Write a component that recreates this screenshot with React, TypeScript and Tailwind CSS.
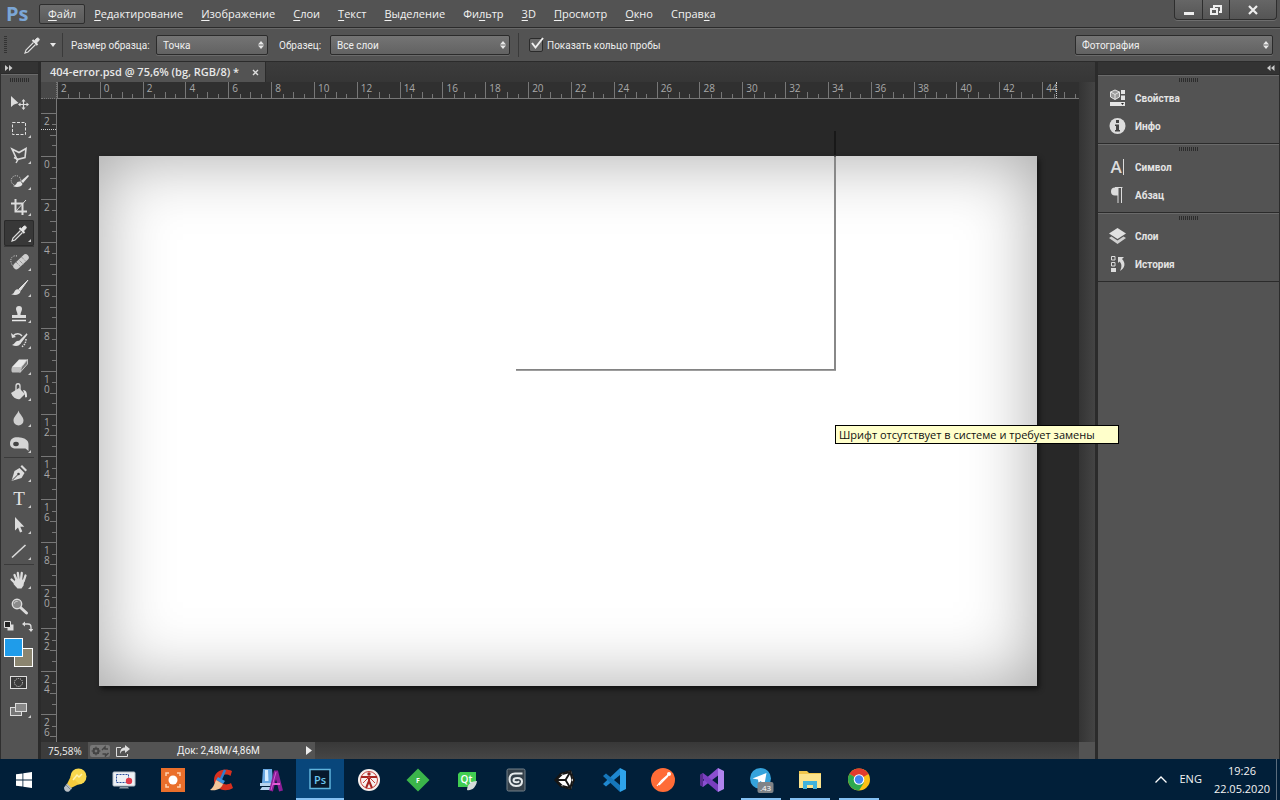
import { useState, type ReactNode } from 'react';
import { FaUnity } from 'react-icons/fa';

type Tool = { name: string; icon: ReactNode; corner?: boolean };

const menuItems = [
  { pre: '', key: 'Ф', post: 'айл' },
  { pre: '', key: 'Р', post: 'едактирование' },
  { pre: '', key: 'И', post: 'зображение' },
  { pre: '', key: 'С', post: 'лои' },
  { pre: '', key: 'Т', post: 'екст' },
  { pre: '', key: 'В', post: 'ыделение' },
  { pre: 'Фи', key: 'л', post: 'ьтр' },
  { pre: '', key: '3', post: 'D' },
  { pre: '', key: 'П', post: 'росмотр' },
  { pre: '', key: 'О', post: 'кно' },
  { pre: 'Справ', key: 'к', post: 'а' },
];

const eyedropper = (
  <>
    <path d="M17 9.5l2.500-3c1.500-1.500 3.800.6 2.300 2.200l-2.700 2.600z" fill="#e4e4e4" stroke="#e4e4e4" />
    <path d="M15.500 8l5 5" stroke="#e4e4e4" strokeWidth="2" />
    <path d="M16.500 10.500L9 18l-1 3 3-1 7.500-7.500" fill="#444" stroke="#dcdcdc" strokeWidth="1.200" />
  </>
);

const toolGroups: Tool[][] = [
  [
    {
      name: 'Перемещение',
      icon: (
        <>
          <path d="M7 6v11l3-2.500 4.500-1.500z" fill="#dcdcdc" />
          <path d="M19.500 10v9M15 14.500h9" stroke="#dcdcdc" strokeWidth="1.200" />
          <path d="M19.500 9l2 2.500h-4zM19.500 20l2-2.500h-4zM14 14.500l2.500-2v4zM25 14.500l-2.500-2v4z" fill="#dcdcdc" />
        </>
      ),
    },
    {
      name: 'Прямоугольная область',
      corner: true,
      icon: <rect x="8.500" y="6.500" width="13" height="12" fill="none" stroke="#e0e0e0" strokeDasharray="3 1.500" />,
    },
    {
      name: 'Лассо',
      corner: true,
      icon: (
        <>
          <path d="M8 7l7 3.500 7-4-1 9-8 2z" fill="none" stroke="#dcdcdc" strokeWidth="1.600" />
          <path d="M10 15.500l4 2-2 3.500" fill="none" stroke="#dcdcdc" strokeWidth="1.400" />
        </>
      ),
    },
    {
      name: 'Быстрое выделение',
      corner: true,
      icon: (
        <>
          <circle cx="12" cy="12.500" r="4.800" fill="none" stroke="#dcdcdc" strokeDasharray="1 1.300" />
          <path d="M24 7l-7 6 2 2 6-7z" fill="#e4e4e4" />
          <path d="M17 14c-2-1-4 0-4.500 1.500S10 18 9 18c3 2 9 1 9.500-2z" fill="#e4e4e4" />
        </>
      ),
    },
    {
      name: 'Рамка',
      corner: true,
      icon: (
        <>
          <path d="M11.500 5v12.500H23M7 9.500h11.500V21" fill="none" stroke="#dcdcdc" strokeWidth="2" />
          <path d="M12 17L22 6" stroke="#dcdcdc" />
        </>
      ),
    },
    { name: 'Пипетка', corner: true, icon: eyedropper },
  ],
  [
    {
      name: 'Восстанавливающая кисть',
      corner: true,
      icon: (
        <>
          <path d="M13 7c-4-1-7 2-6 6 .5 2 1 3 2 4" fill="none" stroke="#dcdcdc" strokeDasharray="1 1.400" />
          <path d="M21.500 8.500L12.500 17" stroke="#cfcfcf" strokeWidth="6.500" strokeLinecap="round" />
          <path d="M14.500 10.500l5 5M17.500 8l4.500 4.500M12 13l4.500 4.500" stroke="#777" strokeDasharray="1 1" />
        </>
      ),
    },
    {
      name: 'Кисть',
      corner: true,
      icon: (
        <>
          <path d="M24 5l-9 9 1.500 1.500z" fill="#e0e0e0" stroke="#e0e0e0" />
          <path d="M15 14.500c-3-1-4 1-5 3-.6 1-1.500 1.500-3 1.500 4 2 9 .5 9.500-2.500z" fill="#e0e0e0" />
        </>
      ),
    },
    {
      name: 'Штамп',
      corner: true,
      icon: (
        <>
          <path d="M15 5a3 3 0 013 3c0 2-1.500 3-1.500 6H22v3H8v-3h5.500c0-3-1.500-4-1.500-6a3 3 0 013-3z" fill="#dcdcdc" />
          <path d="M8 19.500h14" stroke="#e8e8e8" strokeWidth="1.500" />
        </>
      ),
    },
    {
      name: 'Архивная кисть',
      corner: true,
      icon: (
        <>
          <path d="M9 9c3-3 7-3 9 0" fill="none" stroke="#dcdcdc" strokeWidth="1.500" />
          <path d="M7 6l1 5 4-1z" fill="#dcdcdc" />
          <path d="M23 7l-8 8 1 1z" fill="#e0e0e0" stroke="#e0e0e0" strokeWidth="1.500" />
          <path d="M15 14c-3-1-4 3-7 4 4 2 8 1 8.500-2z" fill="#e0e0e0" />
          <path d="M22 12c0 4-2 7-5 8" fill="none" stroke="#dcdcdc" strokeWidth="1.500" strokeDasharray="1.500 1" />
        </>
      ),
    },
    {
      name: 'Ластик',
      corner: true,
      icon: (
        <>
          <path d="M8 14l7-7.500h8.500l-6 7.500z" fill="#e8e8e8" />
          <path d="M8 14h9.500l-2 5.500H8.500c-1 0-1.500-3-.5-5.500z" fill="#c0c0c0" />
          <path d="M17.500 14l6-7.500v4.500l-7.500 8.500z" fill="#777" stroke="#dcdcdc" strokeWidth=".800" />
        </>
      ),
    },
    {
      name: 'Заливка',
      corner: true,
      icon: (
        <>
          <path d="M7 14l8-5 6 6-5 5c-3 1-7-1-9-6z" fill="#d8d8d8" />
          <path d="M12 13V7c0-3 4-3 4 0v5" fill="none" stroke="#dcdcdc" strokeWidth="1.300" />
          <path d="M19 11c4 0 4 4 4 7-2 1-2 0-2-2" fill="#e4e4e4" />
        </>
      ),
    },
    {
      name: 'Размытие',
      corner: true,
      icon: <path d="M14.500 5.500c1 4 5 6 5 10a5 5 0 01-10 0c0-4 4-6 5-10z" fill="#cfcfcf" />,
    },
    {
      name: 'Губка',
      corner: true,
      icon: (
        <>
          <path d="M6 12.500C6 7 11 5.500 16 6.500c5 .5 8.500 3 8.500 6.500v7l-3-2.500H12c-4 0-6-1.500-6-5z" fill="#d4d4d4" />
          <ellipse cx="12" cy="13" rx="2.800" ry="2.200" fill="#444" />
        </>
      ),
    },
  ],
  [
    {
      name: 'Перо',
      corner: true,
      icon: (
        <>
          <path d="M18 5l5 5-1.500 1.500-5-5z" fill="#dcdcdc" />
          <path d="M15.500 8l5 5-3 5-10 3 3-10z" fill="#dcdcdc" />
          <path d="M8 20.500l6-6" stroke="#444" />
          <circle cx="14.500" cy="14" r="1.300" fill="#444" />
        </>
      ),
    },
    {
      name: 'Текст',
      corner: true,
      icon: (
        <text x="15" y="19" textAnchor="middle" fontSize="19" fontFamily="Liberation Serif, serif" fill="#e4e4e4">T</text>
      ),
    },
    {
      name: 'Выделение контура',
      corner: true,
      icon: <path d="M11 5v13.500l3-3 2 5 2.300-1-2-4.700h4z" fill="#dcdcdc" />,
    },
    { name: 'Линия', corner: true, icon: <path d="M8 19.500L21.500 7" stroke="#dcdcdc" strokeWidth="1.600" /> },
  ],
  [
    {
      name: 'Рука',
      corner: true,
      icon: (
        <>
          <path d="M10.500 8l2.500 6M13.800 6l1 7M17.800 6l-.8 7M21.500 8.500l-2 6M7.500 12.500l4 4" stroke="#dcdcdc" strokeWidth="2.300" strokeLinecap="round" />
          <path d="M11 13l9.500-.5-1 6-2 3h-4L9.500 17z" fill="#dcdcdc" />
        </>
      ),
    },
    {
      name: 'Масштаб',
      icon: (
        <>
          <path d="M16.500 14.500l6 5.500" stroke="#dcdcdc" strokeWidth="3" strokeLinecap="round" />
          <circle cx="13" cy="11" r="4.700" fill="#8a8a8a" stroke="#dcdcdc" strokeWidth="1.400" />
          <path d="M10.500 10.500c0-1.500 1.500-2.500 3-2" stroke="#ddd" fill="none" />
        </>
      ),
    },
  ],
];

const panelGroups = [
  [
    {
      title: 'Свойства',
      icon: (
        <>
          <path d="M6 1l4.500 2v5L6 10.500 1.500 8V3z" fill="#9a9a9a" stroke="#e4e4e4" />
          <path d="M1.500 3L6 5.500 10.500 3M6 5.500v5" stroke="#e4e4e4" fill="none" />
          <path d="M12 1h4v4h-4zM12 6.500h4V11h-4zM1 13h15v4H1z" fill="#e4e4e4" />
          <path d="M12 14h3l-1.500 2z" fill="#222" />
        </>
      ),
    },
    {
      title: 'Инфо',
      icon: (
        <>
          <circle cx="8.500" cy="9" r="8" fill="#dcdcdc" />
          <path d="M7 3h3v3H7zM6 7.500h4V13h1v1.500H6V13h1V9H6z" fill="#444" />
        </>
      ),
    },
  ],
  [
    {
      title: 'Символ',
      icon: (
        <>
          <text x="7" y="15" textAnchor="middle" fontSize="17" fontWeight="600" fontFamily="Open Sans, sans-serif" fill="#dcdcdc">A</text>
          <path d="M14.500 1v16" stroke="#dcdcdc" />
        </>
      ),
    },
    {
      title: 'Абзац',
      icon: (
        <>
          <path d="M9 1.500v8H6a4 4 0 010-8z" fill="#dcdcdc" />
          <path d="M6 1.500h7.500M9 2v15M12.500 2v15" stroke="#dcdcdc" />
        </>
      ),
    },
  ],
  [
    {
      title: 'Слои',
      icon: (
        <>
          <path d="M8.500 1L17 6.500 8.500 12 0 6.500z" fill="#e0e0e0" />
          <path d="M0 11l2.500-1.500 6 4 6-4L17 11l-8.500 6z" fill="#cfcfcf" />
        </>
      ),
    },
    {
      title: 'История',
      icon: (
        <>
          <path d="M2.500 1.500h3.500v3.500H2.500zM2.500 7.500h3.500V11H2.500z" fill="none" stroke="#dcdcdc" />
          <path d="M2 13h5v4H2z" fill="#dcdcdc" />
          <path d="M9 2h6l-2 2c4 4 3 9-2 12 2-4 2-7-.5-9.500L9 8z" fill="#dcdcdc" />
        </>
      ),
    },
  ],
];

const taskbarApps: { name: string; icon: ReactNode; state?: 'active' | 'running' }[] = [
  {
    name: 'Лампа',
    icon: (
      <>
        <circle cx="15.500" cy="8.500" r="8" fill="#f9d84e" />
        <path d="M8 8l8 8-8 4-4-4z" fill="#f6cb3c" />
        <path d="M10 12l4-5 2 2 3-3" stroke="#fff3b0" strokeWidth="1.500" fill="none" />
        <path d="M4 15.500l5 5-3 3c-3 1-5-1-5-4z" fill="#b9c0c6" />
        <path d="M3 17l5 5" stroke="#7f8a93" />
      </>
    ),
  },
  {
    name: 'Запись экрана',
    icon: (
      <>
        <rect x="1" y="4" width="22" height="14" rx="1" fill="#eef1f5" stroke="#b8c0c8" />
        <rect x="4.500" y="6.500" width="12" height="8" fill="none" stroke="#2b4f9c" strokeDasharray="2 1" />
        <circle cx="17" cy="13" r="3.200" fill="#e03a4a" />
        <path d="M8 19h8l1 1.500H7z" fill="#8d99a5" />
      </>
    ),
  },
  {
    name: 'Скриншот',
    icon: (
      <>
        <rect width="24" height="24" fill="#ea6f2b" />
        <circle cx="12" cy="12" r="4.500" fill="#fff" />
        <path d="M8 5H5v3M16 5h3v3M8 19H5v-3M16 19h3v-3" fill="none" stroke="#ffd2b0" strokeWidth="1.500" />
      </>
    ),
  },
  {
    name: 'CCleaner',
    icon: (
      <>
        <path d="M22 3C14-1 4 3 4 12c0 9 11 13 19 8l-2-5c-5 3-10 1-10-3.500C11 7 16 5 20.500 8z" fill="#d8301f" />
        <path d="M15 2l-4 9" stroke="#2f7fd0" strokeWidth="2.500" />
        <path d="M8 9l7 4-2 3-7-4z" fill="#3b93e0" />
        <path d="M6 12l7 4c-2 5-6 7-13 6 3-2 4-5 6-10z" fill="#f2c79a" />
      </>
    ),
  },
  {
    name: 'Редактор',
    icon: (
      <>
        <path d="M4 1h9l1 14H3z" fill="#6aa9e4" />
        <path d="M6 2h3l.5 11H6z" fill="#d8edff" />
        <path d="M1 15h13v3H1zM3 19h10v3H1z" fill="#b8d4ee" />
        <path d="M12 23l5-20 5 20" fill="none" stroke="#8d1f98" strokeWidth="4" />
        <path d="M14 16h7" stroke="#e35bd5" strokeWidth="2" />
        <path d="M12 22l5-18" stroke="#d45ad8" />
      </>
    ),
  },
  {
    name: 'Photoshop',
    state: 'active',
    icon: (
      <>
        <rect x="2" y="2.500" width="20" height="19" fill="#07182c" stroke="#5fb4dd" strokeWidth="1.500" />
        <text x="12" y="16.500" textAnchor="middle" fontSize="11" fontWeight="600" fontFamily="Open Sans, sans-serif" fill="#6cc4ee">Ps</text>
      </>
    ),
  },
  {
    name: 'Анатомия',
    icon: (
      <>
        <circle cx="12" cy="12" r="11" fill="#f7f0ee" />
        <circle cx="12" cy="12" r="8.500" fill="none" stroke="#c9423c" />
        <circle cx="12" cy="6" r="1.700" fill="#a72521" />
        <path d="M4 9h16M12 8v6M12 13l-3 7M12 13l3 7" stroke="#a72521" strokeWidth="2" />
        <path d="M12 9l-6 6M12 9l6 6" stroke="#c9423c" />
      </>
    ),
  },
  {
    name: 'Forte',
    icon: (
      <>
        <path d="M12 .5L23.500 12 12 23.500.5 12z" fill="#3bb54a" />
        <text x="12" y="14.500" textAnchor="middle" fontSize="7" fontWeight="700" fontFamily="Open Sans, sans-serif" fill="#fff">F</text>
      </>
    ),
  },
  {
    name: 'Qt Creator',
    icon: (
      <>
        <path d="M5 4h16v11l-4 4H3V6z" fill="#41cd52" />
        <text x="11.500" y="15" textAnchor="middle" fontSize="10" fontWeight="600" fontFamily="Open Sans, sans-serif" fill="#fff">Qt</text>
        <path d="M22 13c-5 0-10 3-10 9 4 1 9-2 10-9z" fill="#d7dbd9" />
      </>
    ),
  },
  {
    name: '3ds Max',
    icon: (
      <>
        <rect x="3" y="1" width="18" height="22" rx="1.500" fill="#34404a" stroke="#75818a" />
        <path d="M18.500 5.500H11c-3.500 0-5.500 2.500-5.500 6S8 18 12 18s6-2 6-4.500-2-3.500-4.500-3.500-4 .8-4 2.200 1.200 2 3 2 2-.4 2.500-1" fill="none" stroke="#e5eaec" strokeWidth="2" />
      </>
    ),
  },
  {
    name: 'Unity',
    icon: (
      <>
        <path d="M1 12l6-7 11-3 4 10-4 10-11-3z" fill="#161616" />
        <path d="M3 12l6-6 9-3 2 9-2 9-9-3z" fill="#fff" />
        <FaUnity x="1" y="1" size={22} color="#161616" />
      </>
    ),
  },
  {
    name: 'Visual Studio Code',
    icon: (
      <>
        <path d="M18 0l6 3v18l-6 3z" fill="#2ea3ea" />
        <path d="M18 0v7L4 18.500 1 16z" fill="#1f87cf" />
        <path d="M18 24v-7L4 5.500 1 8z" fill="#1677bb" />
      </>
    ),
  },
  {
    name: 'Postman',
    icon: (
      <>
        <circle cx="12" cy="12" r="12" fill="#ff6c37" />
        <path d="M18 6l-8 7M17 8l-6 6M10 13l-4 5M11 14l-3 3" stroke="#fff" strokeWidth="1.200" fill="none" />
        <circle cx="18" cy="6" r="2" fill="#fff" />
      </>
    ),
  },
  {
    name: 'Visual Studio',
    icon: (
      <>
        <path d="M18 0l6 3v18l-6 3z" fill="#b084ee" />
        <path d="M18 0v7.500L3 19l-3-2 4-5z" fill="#8b4fcf" />
        <path d="M18 24v-7.500L3 5 0 7l4 5z" fill="#7a3fc0" />
        <path d="M0 7l3-2v14l-3-2z" fill="#5b2d91" />
      </>
    ),
  },
  {
    name: 'Telegram',
    state: 'running',
    icon: (
      <>
        <circle cx="11.500" cy="11.500" r="10.500" fill="#35a3dc" />
        <path d="M3.500 11.500L17.500 6l-2 11-4-3-2 2-.5-3.500z" fill="#fff" />
        <rect x="8.500" y="15" width="16" height="11" rx="2" fill="#808488" />
        <text x="16.500" y="23.500" textAnchor="middle" fontSize="8" fontFamily="Open Sans, sans-serif" fill="#fff">.43</text>
      </>
    ),
  },
  {
    name: 'Проводник',
    state: 'running',
    icon: (
      <>
        <path d="M1 4h8l2 2h12v4H1z" fill="#f0c64c" />
        <path d="M1 7h22v14H1z" fill="#fbe38c" />
        <path d="M5 14h14v8h-4v-4H9v4H5z" fill="#3fb2dc" />
      </>
    ),
  },
  {
    name: 'Chrome',
    state: 'running',
    icon: (
      <>
        <circle cx="12" cy="12.500" r="11" fill="#fbc116" />
        <path d="M12 12.500L2.500 7a11 11 0 0119 0z" fill="#e33b2e" />
        <path d="M12 12.500L2.500 7A11 11 0 0012 23.500l5-8z" fill="#2da94f" />
        <circle cx="12" cy="12.500" r="5.300" fill="#fff" />
        <circle cx="12" cy="12.500" r="4.200" fill="#4285f4" />
      </>
    ),
  },
];

function Grip() {
  return <div className="h-1 w-5 bg-[repeating-linear-gradient(90deg,#2c2c2c_0_1px,transparent_1px_2px)]" />;
}

function SelectBox({ label, value, className }: { label: string; value: string; className: string }) {
  return (
    <div className={`relative h-5 ${className}`}>
      <select
        aria-label={label}
        className="block h-full w-full appearance-none rounded-xs border border-[#2b2b2b] bg-linear-to-b from-[#747474] to-[#626262] pl-1.5 text-[10px] text-[#f0f0f0] shadow-[0_1px_0_#6a6a6a]"
      >
        <option>{value}</option>
      </select>
      <svg className="pointer-events-none absolute top-1.5 right-1" width="6" height="8" viewBox="0 0 6 8" fill="#e8e8e8">
        <path d="M3 0l3 3.400H0zM3 8l3-3.400H0z" />
      </svg>
    </div>
  );
}

function MenuBar() {
  return (
    <header className="flex h-7 shrink-0 items-center border-b border-[#2b2b2b] bg-[#535353] pl-1.5">
      <span className="w-[33px] text-xl leading-6 font-bold text-[#7ba6d6]">Ps</span>
      <nav className="flex flex-1">
        {menuItems.map((item, i) => (
          <button
            key={item.post}
            className={`h-5 rounded-xs border px-2 text-[11px] leading-4 text-[#f2f2f2] ${i === 0
              ? 'border-[#2e2e2e] bg-linear-to-b from-[#6c6c6c] to-[#5a5a5a]'
              : 'border-transparent'
              }`}
          >
            {item.pre}
            <span className="underline underline-offset-2">{item.key}</span>
            {item.post}
          </button>
        ))}
      </nav>
      <div className="mr-[3px] flex h-5 self-start divide-x divide-[#2e2e2e] rounded-b-sm border border-t-0 border-[#2e2e2e] bg-linear-to-b from-[#666] to-[#555] shadow-[0_1px_0_#6e6e6e]">
        <button aria-label="Свернуть" className="flex w-7 items-center justify-center">
          <svg width="16" height="16" viewBox="0 0 16 16"><path d="M3 10h10v3H3z" fill="#eee" /></svg>
        </button>
        <button aria-label="Восстановить" className="flex w-[27px] items-center justify-center">
          <svg width="14" height="14" viewBox="0 0 14 14" fill="none" stroke="#eee" strokeWidth="2">
            <path d="M5 5V3h7v6h-2M2 6h6v5H2z" />
          </svg>
        </button>
        <button aria-label="Закрыть" className="flex w-[46px] items-center justify-center">
          <svg width="12" height="12" viewBox="0 0 12 12" stroke="#eee" strokeWidth="2.200"><path d="M2 2l8 8M10 2l-8 8" /></svg>
        </button>
      </div>
    </header>
  );
}

function OptionsBar() {
  return (
    <div className="flex h-[34px] shrink-0 items-center border-t border-b border-t-[#686868] border-b-[#2b2b2b] bg-[#535353] pr-[7px] pl-1 font-[Roboto] text-[10px] text-[#ededed]">
      <div className="h-[18px] w-[3px] bg-[repeating-linear-gradient(180deg,#333_0_1px,transparent_1px_2px)]" />
      <button aria-label="Пипетка" className="ml-2.5 flex items-center">
        <svg width="30" height="26" viewBox="0 0 30 26" fill="none">{eyedropper}</svg>
        <svg className="ml-[3px]" width="6" height="4" viewBox="0 0 6 4" fill="#e8e8e8"><path d="M0 0h6L3 4z" /></svg>
      </button>
      <div className="ml-1.5 h-6 border-l border-[#3a3a3a]" />
      <span className="ml-2 w-[85px]">Размер образца:</span>
      <SelectBox label="Размер образца" value="Точка" className="w-28" />
      <span className="ml-[11px] w-[51px]">Образец:</span>
      <SelectBox label="Образец" value="Все слои" className="w-[180px]" />
      <div className="ml-2 h-6 border-l border-[#3a3a3a]" />
      <label className="ml-2.5 flex items-center gap-1">
        <span className="relative flex">
          <input type="checkbox" defaultChecked className="peer size-3.5 appearance-none rounded-xs border border-[#2b2b2b] bg-[#6a6a6a]" />
          <svg className="pointer-events-none absolute -top-0.5 left-0 hidden peer-checked:block" width="16" height="16" viewBox="0 0 16 16">
            <path d="M3 7l3.500 4.500L14 2" fill="none" stroke="#f0f0f0" strokeWidth="2" />
          </svg>
        </span>
        Показать кольцо пробы
      </label>
      <div className="flex-1" />
      <SelectBox label="Рабочая среда" value="Фотография" className="w-[198px]" />
    </div>
  );
}

function Toolbar() {
  const [active, setActive] = useState('Пипетка');

  return (
    <aside className="flex w-[38px] shrink-0 flex-col border-l border-[#2f2f2f] bg-[#535353]">
      <div className="flex h-3 items-center border-b border-[#2b2b2b] bg-[#333] pl-1">
        <svg width="8" height="6" viewBox="0 0 8 6" fill="#ccc"><path d="M0 0l3.500 3L0 6zM4 0l3.500 3L4 6z" /></svg>
      </div>
      <div className="flex h-4 justify-center border-t border-[#6a6a6a] pt-[3px]"><Grip /></div>
      <div className="ml-[3px] flex w-[30px] flex-col divide-y divide-[#3a3a3a]">
        {toolGroups.map((group, i) => (
          <div key={i} className={`flex flex-col ${i > 0 ? 'pt-0.5' : ''}`}>
            {group.map((tool) => (
              <button
                key={tool.name}
                aria-label={tool.name}
                onClick={() => setActive(tool.name)}
                className={`h-[26px] w-[30px] rounded-xs ${active === tool.name ? 'bg-[#383838] shadow-[inset_0_0_0_1px_#2a2a2a]' : ''}`}
              >
                <svg width="30" height="26" viewBox="0 0 30 26" fill="none">
                  {tool.icon}
                  {tool.corner && <path d="M27 19v3h-3z" fill="#ccc" />}
                </svg>
              </button>
            ))}
          </div>
        ))}
      </div>
      <div className="flex h-3.5 items-center gap-2 pl-[3px]">
        <button aria-label="Цвета по умолчанию">
          <svg width="10" height="10" viewBox="0 0 10 10">
            <path d="M3.500 3.500h6v6h-6z" fill="#ddd" />
            <path d="M.5.500h6v6h-6z" fill="#222" stroke="#ddd" />
          </svg>
        </button>
        <button aria-label="Поменять цвета">
          <svg width="11" height="11" viewBox="0 0 11 11" fill="none" stroke="#ddd" strokeWidth="1.300">
            <path d="M2 3h4c2 0 3 1 3 3v3" />
            <path d="M0 3l3-2.500v5zM9 11L6.500 8h5z" fill="#ddd" stroke="none" />
          </svg>
        </button>
      </div>
      <div className="relative mt-[5px] ml-[3px] size-[29px]">
        <button aria-label="Фоновый цвет" className="absolute right-0 bottom-0 size-[19px] border border-white bg-[#8b8570]" />
        <button aria-label="Основной цвет" className="absolute top-0 left-0 size-[19px] border border-white bg-[#1f9cea]" />
      </div>
      <button aria-label="Быстрая маска" className="mt-[9px] ml-2">
        <svg className="block" width="18" height="14" viewBox="0 0 18 14">
          <rect x="1.500" y=".5" width="16" height="12" fill="#3a3a3a" stroke="#ddd" />
          <circle cx="9.500" cy="6.500" r="4" fill="none" stroke="#ddd" strokeDasharray="1 1" />
        </svg>
      </button>
      <button aria-label="Режим экрана" className="mt-3 ml-2">
        <svg className="block" width="22" height="17" viewBox="0 0 22 17">
          <rect x="1.500" y="5.500" width="11" height="8" fill="#777" stroke="#ddd" />
          <rect x="6.500" y="1.500" width="11" height="8" fill="#888" stroke="#ddd" />
          <path d="M22 13v3h-3z" fill="#ccc" />
        </svg>
      </button>
    </aside>
  );
}

function HorizontalRuler() {
  return (
    <div className="relative h-[17px] flex-1 overflow-hidden border-b border-[#777] bg-[#303030]">
      <div className="grid h-full w-[1028px] grid-cols-24">
        {Array.from({ length: 24 }, (_, i) => (
          <div key={i} className="flex flex-col border-l border-[#777]">
            <span className="h-2.5 pl-[3px] text-[10px] leading-3 text-[#a8a8a8]">{Math.abs(i * 2 - 2)}</span>
            <div className="grid flex-1 grid-cols-4 items-end">
              <i />
              <i className="h-1 border-l border-[#777]" />
              <i className="h-1.5 border-l border-[#777]" />
              <i className="h-1 border-l border-[#777]" />
            </div>
          </div>
        ))}
      </div>
      <div className="absolute top-0 right-[22px] h-full border-l border-dotted border-[#ccc]" />
    </div>
  );
}

function VerticalRuler() {
  return (
    <div className="relative w-4 shrink-0 overflow-hidden border-r border-[#777] bg-[#303030]">
      <div className="h-3.5" />
      <div className="grid h-[644px] grid-rows-15">
        {Array.from({ length: 15 }, (_, i) => (
          <div key={i} className="flex border-t border-[#777]">
            <span className="w-[9px] pt-0.5 pl-[3px] text-[10px] leading-2.5 break-all text-[#a8a8a8]">
              {Math.abs(i * 2 - 2)}
            </span>
            <div className="grid flex-1 grid-rows-4 justify-items-end">
              <i />
              <i className="w-1 border-t border-[#777]" />
              <i className="w-1.5 border-t border-[#777]" />
              <i className="w-1 border-t border-[#777]" />
            </div>
          </div>
        ))}
      </div>
      <div className="absolute top-[30px] left-0 w-full border-t border-dotted border-[#ccc]" />
    </div>
  );
}

function DocumentWindow() {
  return (
    <main className="flex min-w-0 flex-1 flex-col">
      <div className="flex h-5 bg-linear-to-b from-[#3c3c3c] to-[#363636]">
        <div className="flex w-[225px] items-center justify-between border-r border-[#2b2b2b] bg-[#535353] pr-1.5 pl-[9px] text-[11px] font-semibold text-[#e8e8e8]">
          404-error.psd @ 75,6% (bg, RGB/8) *
          <button aria-label="Закрыть вкладку">
            <svg width="7" height="7" viewBox="0 0 7 7" stroke="#ddd" strokeWidth="1.400"><path d="M1 1l5 5M6 1L1 6" /></svg>
          </button>
        </div>
      </div>
      <div className="flex min-h-0 flex-1">
        <div className="flex min-w-0 flex-1 flex-col">
          <div className="flex">
            <div className="h-[17px] w-4 border-r border-b border-dotted border-[#777] bg-[#484848]" />
            <HorizontalRuler />
          </div>
          <div className="flex min-h-0 flex-1">
            <VerticalRuler />
            <div className="relative flex flex-1 bg-[#282828] pt-[57px] pr-[42px] pb-14 pl-[42px]">
              <div className="flex-1 bg-white shadow-[2px_3px_5px_#111,inset_0_0_70px_rgba(0,0,0,0.36)]" />
              {/* drop shadow left behind by the closed dialog */}
              <div className="absolute top-8 left-[459px] h-60 w-80">
                <div className="absolute top-0 right-0 h-full w-0.5 bg-linear-to-b from-[#181818] from-10% to-[#888] to-11%" />
                <div className="absolute bottom-0 left-0 h-0.5 w-full bg-linear-to-b from-[#777] to-[#aaa]" />
              </div>
              <div role="tooltip" className="absolute top-[326px] left-[778px] z-10 h-[19px] w-[284px] border border-black bg-[#ffffcb] pl-[3px] text-[11px] leading-[17px] whitespace-nowrap text-[#111]">
                Шрифт отсутствует в системе и требует замены
              </div>
            </div>
          </div>
        </div>
        <div className="w-4 bg-linear-to-r from-[#343434] to-[#444]" />
      </div>
      <footer className="flex h-[17px] shrink-0 items-center bg-linear-to-b from-[#383838] to-[#464646] text-[10px] text-[#f0f0f0]">
        <input aria-label="Масштаб" defaultValue="75,58%" className="h-full w-[47px] bg-[#3c3c3c] pl-[7px]" />
        <div className="flex h-full w-[227px] items-center bg-[#535353] pl-0.5">
          <button aria-label="Параметры" className="rounded-xs bg-[#777]">
            <svg width="20" height="12" viewBox="0 0 20 12">
              <circle cx="6" cy="6" r="2.500" fill="none" stroke="#444" strokeWidth="2" />
              <path d="M6 1.500v9M1.500 6h9M3 3l6 6M9 3L3 9" stroke="#444" />
              <circle cx="6" cy="6" r="1.200" fill="#777" />
              <path d="M12 5l3-3v2h3M18.500 8l-3 3V9h-3" stroke="#444" strokeWidth="1.500" fill="none" />
            </svg>
          </button>
          <button aria-label="Экспорт" className="ml-1.5">
            <svg width="14" height="12" viewBox="0 0 14 12">
              <path d="M5 2.500H.500v9h11V9" fill="none" stroke="#ddd" />
              <path d="M9 0l5 4-5 4V5.500C6 5.500 5 6.500 4 9c0-4 1.500-6.500 5-6.500z" fill="#ddd" />
            </svg>
          </button>
          <span className="flex-1 pl-[47px] font-[Roboto]">Док: 2,48M/4,86M</span>
          <button aria-label="Меню состояния" className="mr-[3px]">
            <svg width="6" height="9" viewBox="0 0 6 9" fill="#eee"><path d="M0 0l6 4.500L0 9z" /></svg>
          </button>
        </div>
        <div className="flex-1" />
        <div className="h-full w-4 bg-[#535353]" />
      </footer>
    </main>
  );
}

function PanelDock() {
  return (
    <aside className="mr-px w-[181px] shrink-0 bg-[#535353]">
      <div className="flex h-3 items-center justify-end bg-[#333] pr-1">
        <svg width="8" height="6" viewBox="0 0 8 6" fill="#ccc"><path d="M3.500 0v6L0 3zM7.500 0v6L4 3z" /></svg>
      </div>
      <div className="border-t border-[#2b2b2b]">
        {panelGroups.map((group) => (
          <section key={group[0].title} className="border-t border-b border-t-[#6a6a6a] border-b-[#2b2b2b] pb-[3px]">
            <div className="flex h-2 justify-center pt-0.5"><Grip /></div>
            {group.map((panel) => (
              <button key={panel.title} className="flex h-7 w-full items-center gap-[9px] pl-[11px] font-[Roboto] text-[10px] font-bold text-[#e4e4e4]">
                <svg width="17" height="18" viewBox="0 0 17 18" fill="none" overflow="visible">{panel.icon}</svg>
                {panel.title}
              </button>
            ))}
          </section>
        ))}
      </div>
    </aside>
  );
}

function Taskbar() {
  return (
    <footer className="flex h-[41px] shrink-0 bg-[#011f39] text-[11px] text-[#f4f4f4]">
      <button aria-label="Пуск" className="mr-[3px] flex w-12 items-center justify-center">
        <svg width="16" height="16" viewBox="0 0 16 16" fill="#fff">
          <path d="M0 2.300L6.500 1.400v6.200H0zM7.300 1.300L16 0v7.600H7.300zM0 8.400h6.500v6.200L0 13.700zM7.300 8.400H16V16l-8.700-1.300z" />
        </svg>
      </button>
      <div className="flex flex-1 gap-px">
        {taskbarApps.map((app) => (
          <button
            key={app.name}
            aria-label={app.name}
            className={`flex w-12 flex-col items-center ${app.state === 'active' ? 'bg-[#08467b]' : ''}`}
          >
            <span className="flex flex-1 items-center">
              <svg width="24" height="24" viewBox="0 0 24 24" fill="none" overflow="visible">{app.icon}</svg>
            </span>
            {app.state === 'active' && <span className="h-0.5 w-full bg-[#84c0f2]" />}
            {app.state === 'running' && <span className="h-0.5 w-10 bg-[#84c0f2]" />}
          </button>
        ))}
      </div>
      <button aria-label="Скрытые значки" className="px-3">
        <svg width="12" height="7" viewBox="0 0 12 7" fill="none" stroke="#fff" strokeWidth="1.300"><path d="M.5 6.500L6 1l5.500 5.500" /></svg>
      </button>
      <button>ENG</button>
      <div className="mr-1.5 ml-3 flex flex-col justify-center text-center leading-[18px]">
        <span>19:26</span>
        <span>22.05.2020</span>
      </div>
      <div className="mr-[3px] border-l border-[#5a6c7d]" />
    </footer>
  );
}

export default function App() {
  return (
    <div className="flex h-screen flex-col overflow-hidden bg-[#2b2b2b] font-['Open_Sans','Noto_Sans',sans-serif]">
      <MenuBar />
      <OptionsBar />
      <div className="flex min-h-0 flex-1 gap-[3px]">
        <Toolbar />
        <DocumentWindow />
        <PanelDock />
      </div>
      <Taskbar />
    </div>
  );
}
